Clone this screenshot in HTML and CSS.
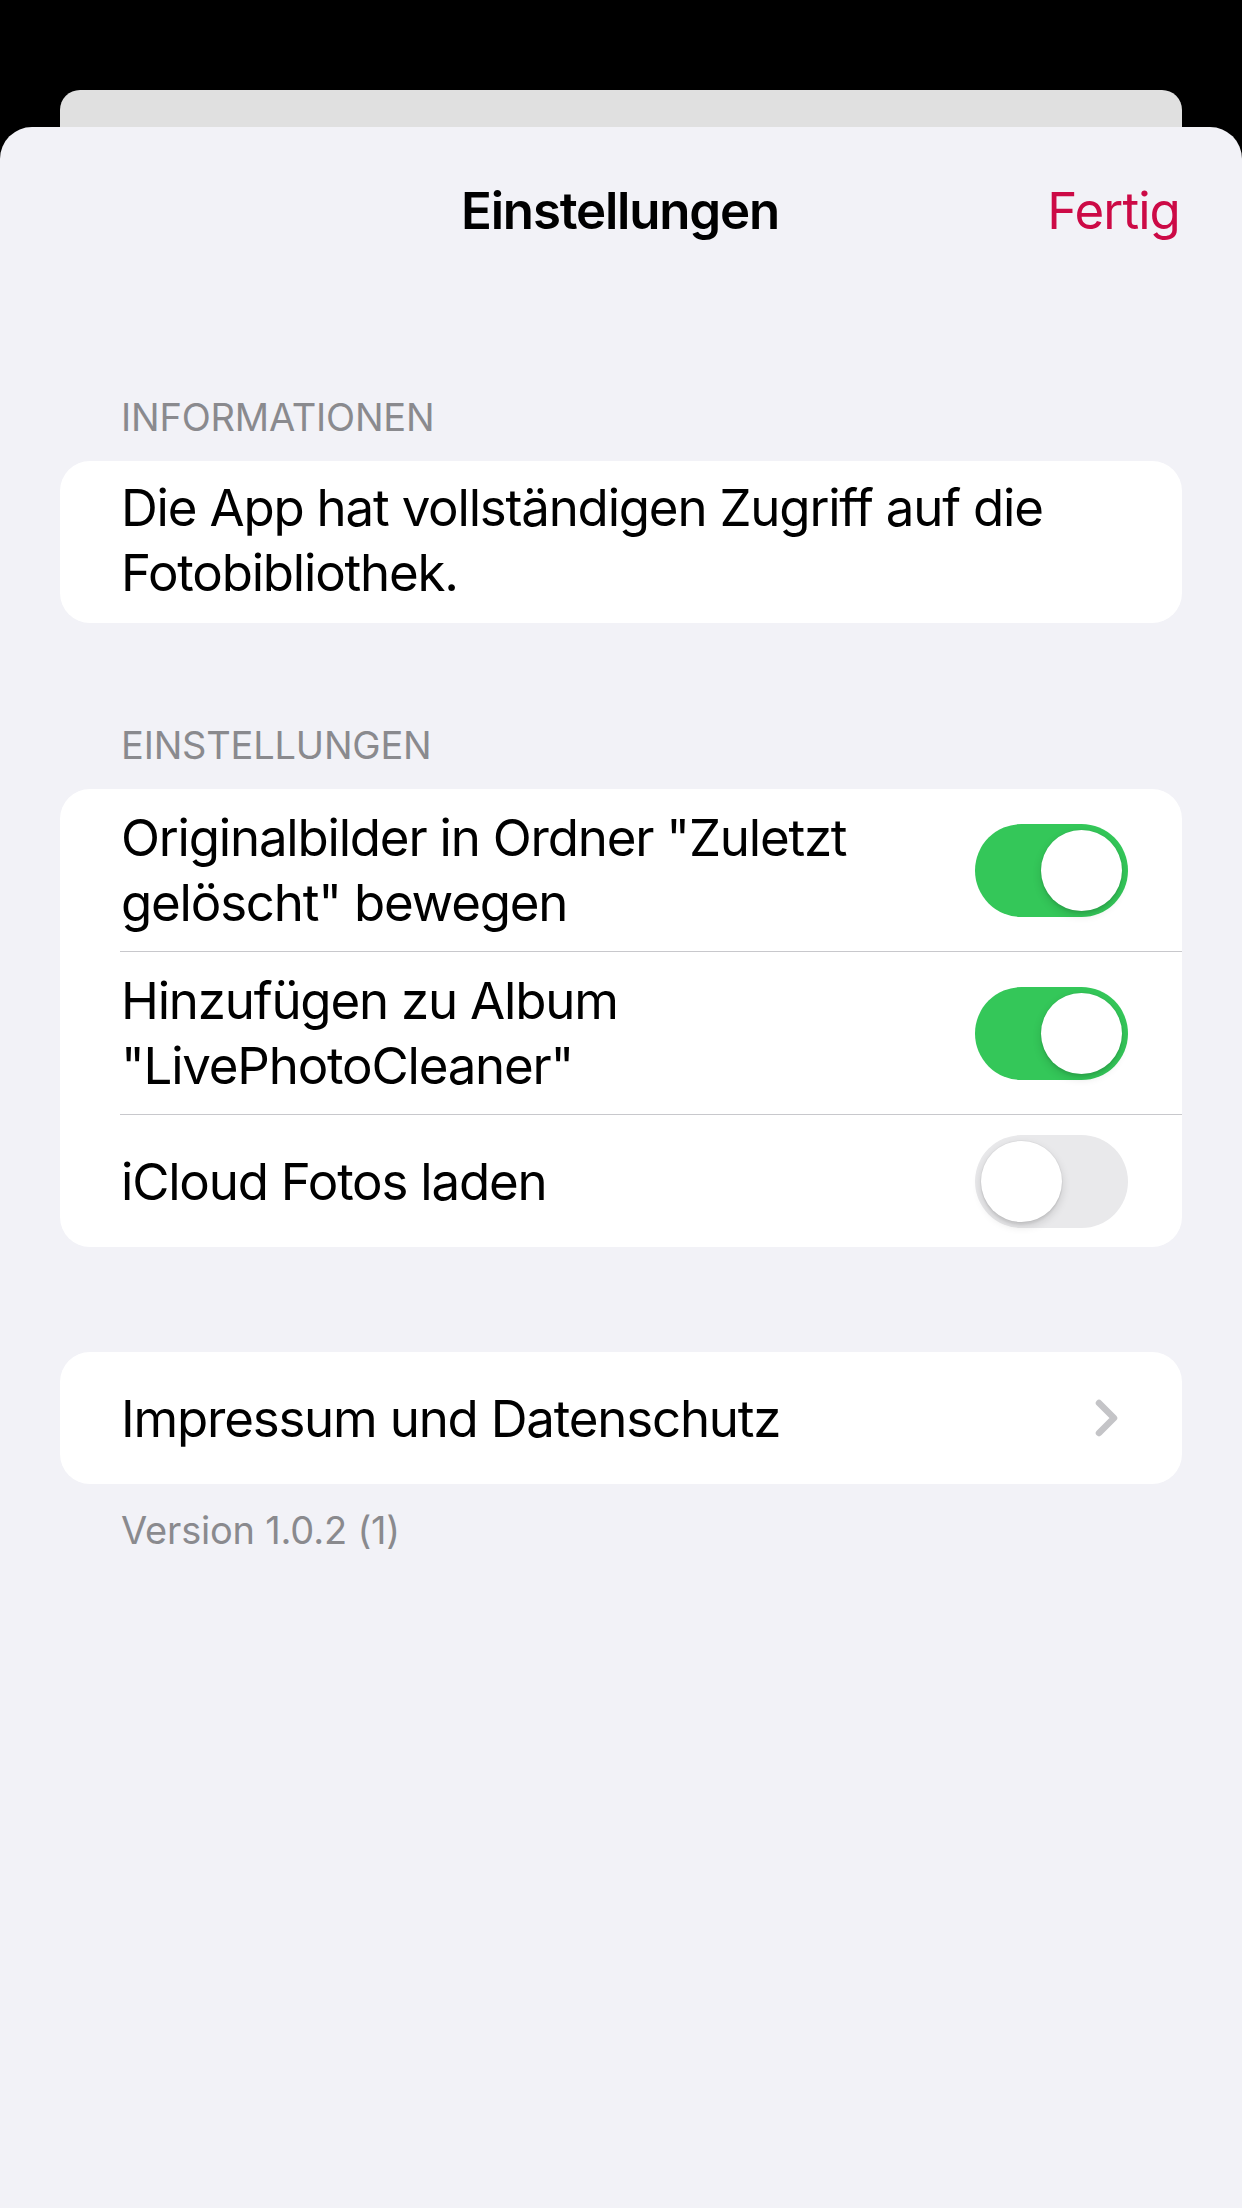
FILE: index.html
```html
<!DOCTYPE html>
<html lang="de">
<head>
<meta charset="utf-8">
<title>Einstellungen</title>
<link rel="stylesheet" href="styles.css">
</head>
<body>
<div class="screen">
  <div class="backcard"></div>
  <div class="sheet">
    <header class="nav">
      <span class="nav-side"></span>
      <h1 class="nav-title">Einstellungen</h1>
      <span class="nav-side nav-right"><span class="nav-button">Fertig</span></span>
    </header>

    <section class="group">
      <h2 class="group-header">INFORMATIONEN</h2>
      <div class="card">
        <div class="row row-text">
          <div class="row-inner">
            <p class="label">Die App hat vollständigen Zugriff auf die Fotobibliothek.</p>
          </div>
        </div>
      </div>
    </section>

    <section class="group">
      <h2 class="group-header">EINSTELLUNGEN</h2>
      <div class="card">
        <div class="row row-tall">
          <div class="row-inner sep">
            <p class="label">Originalbilder in Ordner "Zuletzt gelöscht" bewegen</p>
            <span class="switch on"><span class="knob"></span></span>
          </div>
        </div>
        <div class="row row-tall">
          <div class="row-inner sep">
            <p class="label">Hinzufügen zu Album "LivePhotoCleaner"</p>
            <span class="switch on"><span class="knob"></span></span>
          </div>
        </div>
        <div class="row row-single">
          <div class="row-inner">
            <p class="label">iCloud Fotos laden</p>
            <span class="switch off"><span class="knob"></span></span>
          </div>
        </div>
      </div>
    </section>

    <section class="group group-plain">
      <div class="card">
        <div class="row row-single">
          <div class="row-inner row-link">
            <p class="label">Impressum und Datenschutz</p>
            <svg class="chevron" viewBox="0 0 24 38" width="24" height="38" aria-hidden="true">
              <polyline points="4,4 19,19 4,34" fill="none" stroke="#c4c4c7" stroke-width="6.5" stroke-linecap="round" stroke-linejoin="round"/>
            </svg>
          </div>
        </div>
      </div>
      <p class="footer">Version 1.0.2 (1)</p>
    </section>
  </div>
</div>
</body>
</html>
```

FILE: styles.css
```css
* { box-sizing: border-box; }

html, body {
  margin: 0;
  padding: 0;
  height: 100%;
}

body {
  background: #000;
  font-family: "Inter", "Noto Sans", "Liberation Sans", sans-serif;
  color: #000;
  overflow: hidden;
}

.screen {
  height: 100vh;
  display: flex;
  flex-direction: column;
  padding-top: 90px;
}

.backcard {
  height: 37px;
  margin: 0 60px;
  background: #e0e0e0;
  border-radius: 20px 20px 0 0;
  flex: none;
}

.sheet {
  flex: 1;
  background: #f2f2f7;
  border-radius: 32px 32px 0 0;
}

.nav {
  height: 168px;
  display: grid;
  grid-template-columns: 1fr auto 1fr;
  align-items: center;
  padding: 0 62px 0 60px;
}

.nav-title {
  margin: 0;
  font-size: 51px;
  font-weight: 600;
  letter-spacing: -1.2px;
  line-height: 168px;
}

.nav-right {
  justify-self: end;
}

.nav-button {
  font-size: 51px;
  color: #cc0a46;
  letter-spacing: -0.9px;
  line-height: 168px;
}

.group {
  padding: 0 60px;
}

.group-header {
  margin: 0;
  padding: 98px 0 20px 61px;
  font-size: 38px;
  font-weight: 400;
  line-height: 48px;
  color: #8a8a8e;
  letter-spacing: -0.2px;
}

.group-plain {
  padding-top: 105px;
}

.card {
  background: #fff;
  border-radius: 30px;
  overflow: hidden;
}

.row {
  padding-left: 60px;
}

.row-inner {
  display: flex;
  align-items: center;
  gap: 30px;
  padding-right: 54px;
}

.row-text .row-inner {
  padding: 14px 40px 18px 1px;
}

.row-tall .row-inner {
  height: 163px;
  padding-left: 1px;
}

.row-single .row-inner {
  height: 132px;
  padding-left: 1px;
}

.sep {
  border-bottom: 1px solid #c8c8cc;
}

.row-link {
  padding-right: 63px;
}

.label {
  margin: 0;
  flex: 1;
  font-size: 51px;
  line-height: 65px;
  letter-spacing: -1.2px;
}

.switch {
  flex: none;
  margin-left: auto;
  position: relative;
  width: 153px;
  height: 93px;
  border-radius: 47px;
}

.switch.on { background: #34c759; }
.switch.off { background: #e9e9eb; }

.knob {
  position: absolute;
  top: 6px;
  width: 81px;
  height: 81px;
  border-radius: 50%;
  background: #fff;
  box-shadow: 0 4px 10px rgba(0, 0, 0, 0.14), 0 3px 2px rgba(0, 0, 0, 0.05), 0 0 0 1px rgba(0, 0, 0, 0.03);
}

.switch.on .knob { right: 6px; }
.switch.off .knob { left: 6px; }

.chevron {
  flex: none;
  margin-left: auto;
  width: 24px;
  height: 38px;
}

.footer {
  margin: 0;
  padding: 22px 0 0 61px;
  font-size: 38px;
  line-height: 48px;
  color: #8a8a8e;
  letter-spacing: -0.2px;
}
```
